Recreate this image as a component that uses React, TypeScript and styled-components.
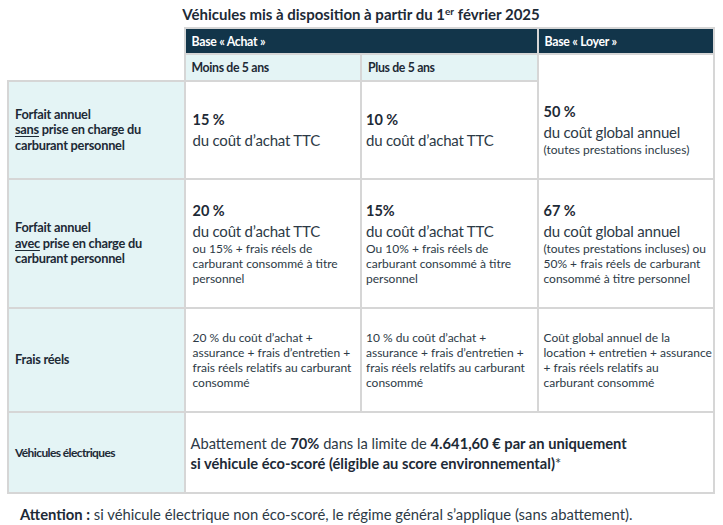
import React from "react";
import styled, { createGlobalStyle } from "styled-components";

const Global = createGlobalStyle`
  html, body { margin: 0; padding: 0; background: #ffffff; }
  body { font-family: Lato, "Noto Sans", sans-serif; color: #2d3a46; }
  sup { line-height: 0; }
`;

const Page = styled.div`
  width: 723px;
  padding: 4px 8px 0 7px;
  box-sizing: border-box;
  font-family: Lato, sans-serif;
`;

const Title = styled.h1`
  margin: 0;
  height: 23px;
  text-align: center;
  font-family: Lato, sans-serif;
  font-size: 15px;
  letter-spacing: 0;
  font-weight: 700;
  color: #1d2a36;
  line-height: 20px;
  sup { font-size: 10px; vertical-align: 5px; }
`;

const Table = styled.table`
  width: 708px;
  border-collapse: collapse;
  table-layout: fixed;
`;

const Row = styled.tr<{ $h: number }>`
  height: ${(p) => p.$h}px;
`;

const Cell = styled.td<{ $pad?: number }>`
  border: 2px solid #d6d6d6;
  padding: 0 1px 0 ${(p) => p.$pad ?? 5}px;
  vertical-align: middle;
  background: #ffffff;
`;

const Blank = styled.td`
  border: none;
  padding: 0;
  background: transparent;
`;

const HeadCell = styled(Cell)`
  background: #12354a;
  color: #ffffff;
  font-weight: 700;
  font-size: 12.3px;
  letter-spacing: -0.3px;
  padding-left: 6px;
`;

const SubHead = styled(Cell)`
  background: #e4f4f5;
  color: #1d2a36;
  font-weight: 700;
  font-size: 12.3px;
  letter-spacing: -0.35px;
  padding-left: 6px;
`;

const EmptyTop = styled(Cell)`
  border-bottom: hidden;
`;

const Label = styled(Cell)<{ $tight?: boolean }>`
  background: #e4f4f5;
  color: #1d2a36;
  font-weight: 700;
  font-size: ${(p) => (p.$tight ? "12px" : "12.8px")};
  letter-spacing: ${(p) => (p.$tight ? "-0.6px" : "-0.25px")};
  line-height: 15.5px;
  padding-left: 6px;
  white-space: nowrap;
  u { text-underline-offset: 2px; }
`;

const ValueCell = styled(Cell)<{ $noTop?: boolean }>`
  ${(p) => (p.$noTop ? "border-top: hidden;" : "")}
`;

const Rate = styled.div`
  font-weight: 700;
  font-size: 14.5px;
  line-height: 20px;
  color: #1d2a36;
`;

const Big = styled.div`
  font-size: 15px;
  letter-spacing: -0.2px;
  line-height: 20px;
  color: #2d3a46;
`;

const Small = styled.div`
  font-size: 12px;
  line-height: 15px;
  color: #2d3a46;
`;

const Wide = styled(Cell)`
  font-size: 14.7px;
  line-height: 20px;
  padding-left: 5px;
  color: #2d3a46;
  b { color: #1d2a36; }
`;

const Note = styled.p`
  margin: 0;
  padding: 11px 0 0 13px;
  font-size: 14.8px;
  line-height: 18px;
  color: #2d3a46;
  b { color: #1d2a36; }
`;

export default function App() {
  return (
    <Page>
      <Global />
      <Title>
        Véhicules mis à disposition à partir du 1<sup>er</sup> février 2025
      </Title>
      <Table>
        <colgroup>
          <col style={{ width: "25%" }} />
          <col style={{ width: "25%" }} />
          <col style={{ width: "25%" }} />
          <col style={{ width: "25%" }} />
        </colgroup>
        <tbody>
          <Row $h={26}>
            <Blank />
            <HeadCell colSpan={2}>Base « Achat »</HeadCell>
            <HeadCell>Base « Loyer »</HeadCell>
          </Row>
          <Row $h={27}>
            <Blank />
            <SubHead>Moins de 5 ans</SubHead>
            <SubHead>Plus de 5 ans</SubHead>
            <EmptyTop />
          </Row>
          <Row $h={98}>
            <Label>
              Forfait annuel
              <br />
              <u>sans</u> prise en charge du
              <br />
              carburant personnel
            </Label>
            <Cell $pad={7}>
              <Rate>15 %</Rate>
              <Big>du coût d’achat TTC</Big>
            </Cell>
            <Cell $pad={4}>
              <Rate>10 %</Rate>
              <Big>du coût d’achat TTC</Big>
            </Cell>
            <ValueCell $noTop $pad={5}>
              <Rate>50 %</Rate>
              <Big>du coût global annuel</Big>
              <Small>(toutes prestations incluses)</Small>
            </ValueCell>
          </Row>
          <Row $h={129}>
            <Label>
              Forfait annuel
              <br />
              <u>avec</u> prise en charge du
              <br />
              carburant personnel
            </Label>
            <Cell $pad={7}>
              <Rate>20 %</Rate>
              <Big>du coût d’achat TTC</Big>
              <Small>ou 15% + frais réels de carburant consommé à titre personnel</Small>
            </Cell>
            <Cell $pad={4}>
              <Rate>15%</Rate>
              <Big>du coût d’achat TTC</Big>
              <Small>Ou 10% + frais réels de carburant consommé à titre personnel</Small>
            </Cell>
            <Cell $pad={5}>
              <Rate>67 %</Rate>
              <Big>du coût global annuel</Big>
              <Small>
                (toutes prestations incluses) ou 50% + frais réels de carburant consommé à titre
                personnel
              </Small>
            </Cell>
          </Row>
          <Row $h={104}>
            <Label>Frais réels</Label>
            <Cell $pad={7}>
              <Small>
                20 % du coût d’achat + assurance + frais d’entretien + frais réels relatifs au
                carburant consommé
              </Small>
            </Cell>
            <Cell $pad={4}>
              <Small>
                10 % du coût d’achat + assurance + frais d’entretien + frais réels relatifs au
                carburant consommé
              </Small>
            </Cell>
            <Cell $pad={5}>
              <Small>
                Coût global annuel de la location + entretien + assurance + frais réels relatifs
                au carburant consommé
              </Small>
            </Cell>
          </Row>
          <Row $h={81}>
            <Label $tight>Véhicules électriques</Label>
            <Wide colSpan={3}>
              Abattement de <b>70%</b> dans la limite de <b>4.641,60 € par an uniquement</b>
              <br />
              <b>si véhicule éco-scoré (éligible au score environnemental)</b>*
            </Wide>
          </Row>
        </tbody>
      </Table>
      <Note>
        <b>Attention :</b> si véhicule électrique non éco-scoré, le régime général s’applique
        (sans abattement).
      </Note>
    </Page>
  );
}
